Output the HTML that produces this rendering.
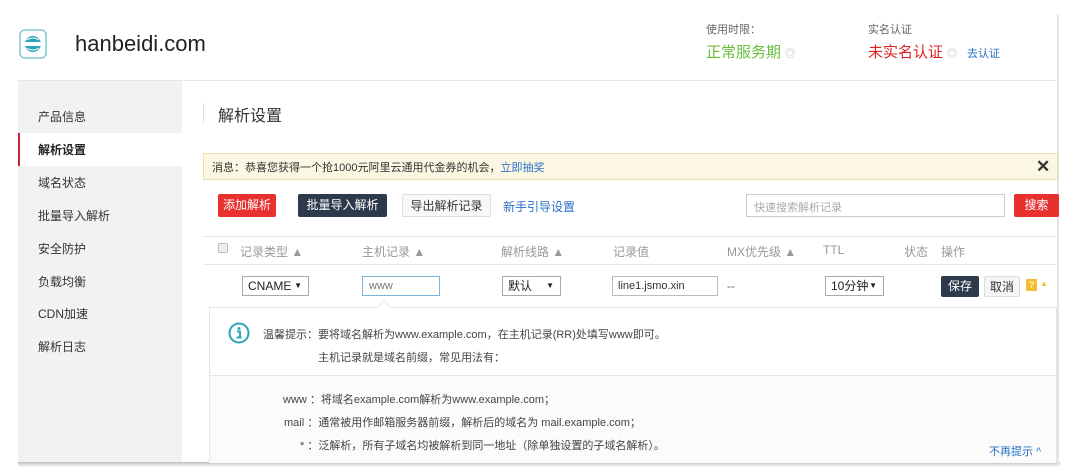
<!DOCTYPE html>
<html><head><meta charset="utf-8"><style>
*{margin:0;padding:0;box-sizing:border-box}
body{width:1080px;height:473px;background:#fff;position:relative;overflow:hidden;font-family:"Liberation Sans","Noto Sans CJK SC",sans-serif;color:#333;font-size:12px}
.a{position:absolute;white-space:nowrap}
.btn{position:absolute;height:23px;line-height:23px;text-align:center;font-size:12px;border-radius:2px}
.sel{position:absolute;height:20px;border:1px solid #a9a9a9;background:#fff;font-size:12px;line-height:18px;padding-left:5px;color:#222}
.sel:after{content:"▼";position:absolute;right:6px;font-size:8px;top:0}
.side{position:absolute;left:38px;font-size:12px;color:#333}
.th{position:absolute;top:243px;font-size:12px;color:#999}
</style></head><body>
<div class="a" style="left:18px;top:462px;width:1042px;height:5px;background:linear-gradient(#bbb,#fff)"></div>
<div class="a" style="left:1057px;top:15px;width:2px;height:450px;background:#e4e4e4"></div>
<svg class="a" style="left:19px;top:29px" width="28" height="30" viewBox="0 0 28 30"><rect x="1" y="1" width="26" height="28" rx="5" fill="#fff" stroke="#7fc9d3" stroke-width="1.5"/><circle cx="14" cy="15" r="8" fill="#2aa6b8"/><rect x="6" y="13" width="16" height="4" fill="#fff"/><path d="M8 11 Q14 7 20 11 M8 19 Q14 23 20 19" stroke="#fff" fill="none"/></svg>
<div class="a" style="left:75px;top:31px;font-size:22px;color:#222">hanbeidi.com</div>
<div class="a" style="left:706px;top:21px;font-size:11px;color:#666">使用时限：</div>
<div class="a" style="left:706px;top:41px;font-size:15px;color:#6abf3a">正常服务期 <span style="font-size:10px;color:#bbb">◎</span></div>
<div class="a" style="left:868px;top:21px;font-size:11px;color:#666">实名认证</div>
<div class="a" style="left:868px;top:41px;font-size:15px;color:#e02020">未实名认证 <span style="font-size:10px;color:#bbb">◎</span></div>
<div class="a" style="left:967px;top:45px;font-size:11px;color:#2a6fc9">去认证</div>
<div class="a" style="left:18px;top:80px;width:1040px;height:1px;background:#e6e6e6"></div>
<div class="a" style="left:18px;top:81px;width:164px;height:381px;background:#f3f2f3"></div>
<div class="a" style="left:18px;top:133px;width:164px;height:33px;background:#fff"></div>
<div class="a" style="left:18px;top:133px;width:2px;height:33px;background:#c9272f"></div>
<div class="side" style="top:108px">产品信息</div>
<div class="side" style="top:141px;color:#222;font-weight:bold">解析设置</div>
<div class="side" style="top:174px">域名状态</div>
<div class="side" style="top:207px">批量导入解析</div>
<div class="side" style="top:240px">安全防护</div>
<div class="side" style="top:273px">负载均衡</div>
<div class="side" style="top:305px">CDN加速</div>
<div class="side" style="top:338px">解析日志</div>
<div class="a" style="left:203px;top:103px;width:1px;height:20px;background:#ddd"></div>
<div class="a" style="left:218px;top:102px;font-size:16px;color:#333">解析设置</div>
<div class="a" style="left:203px;top:153px;width:855px;height:27px;background:#fcf7e3;border:1px solid #eadfb5"></div>
<div class="a" style="left:212px;top:159px;font-size:11px;color:#333">消息：恭喜您获得一个抢1000元阿里云通用代金券的机会，<span style="color:#2a6fc9">立即抽奖</span></div>
<div class="a" style="left:1036px;top:157px;font-size:17px;font-weight:bold;color:#333">✕</div>
<div class="btn" style="left:218px;top:194px;width:58px;background:#e8302f;color:#fff">添加解析</div>
<div class="btn" style="left:298px;top:194px;width:89px;background:#2d3a4b;color:#fff">批量导入解析</div>
<div class="btn" style="left:402px;top:194px;width:89px;background:#f8f8f8;border:1px solid #ddd;color:#333">导出解析记录</div>
<div class="a" style="left:503px;top:198px;color:#2a6fc9">新手引导设置</div>
<div class="a" style="left:746px;top:194px;width:259px;height:23px;border:1px solid #ccc;padding:4px 7px;font-size:11px;color:#aaa">快速搜索解析记录</div>
<div class="btn" style="left:1014px;top:194px;width:45px;background:#e8302f;color:#fff">搜索</div>
<div class="a" style="left:203px;top:236px;width:855px;height:1px;background:#e6e6e6"></div>
<div class="a" style="left:218px;top:243px;width:10px;height:10px;border:1px solid #bbb;background:#eee;border-radius:2px"></div>
<div class="th" style="left:240px">记录类型 ▲</div>
<div class="th" style="left:362px">主机记录 ▲</div>
<div class="th" style="left:501px">解析线路 ▲</div>
<div class="th" style="left:613px">记录值</div>
<div class="th" style="left:727px">MX优先级 ▲</div>
<div class="th" style="left:823px">TTL</div>
<div class="th" style="left:904px">状态</div>
<div class="th" style="left:941px">操作</div>
<div class="a" style="left:203px;top:264px;width:855px;height:1px;background:#e6e6e6"></div>
<div class="sel" style="left:242px;top:276px;width:67px">CNAME</div>
<div class="a" style="left:362px;top:276px;width:78px;height:20px;border:1px solid #7ab4dc;padding:3px 6px;font-size:11px;color:#777">www</div>
<div class="sel" style="left:502px;top:276px;width:59px">默认</div>
<div class="a" style="left:612px;top:276px;width:106px;height:20px;border:1px solid #bbb;padding:3px 5px;font-size:11px;color:#333">line1.jsmo.xin</div>
<div class="a" style="left:727px;top:279px;color:#666">--</div>
<div class="sel" style="left:825px;top:276px;width:59px">10分钟</div>
<div class="btn" style="left:941px;top:276px;width:38px;height:21px;line-height:21px;background:#2d3a4b;color:#fff">保存</div>
<div class="btn" style="left:984px;top:276px;width:36px;height:21px;line-height:21px;background:#f5f5f5;border:1px solid #ddd;color:#333">取消</div>
<div class="a" style="left:1026px;top:279px;width:11px;height:12px;background:#f0c030;color:#fff;font-size:9px;text-align:center;line-height:12px">?</div>
<div class="a" style="left:1040px;top:279px;font-size:8px;color:#f0c030">▲</div>
<div class="a" style="left:209px;top:307px;width:848px;height:156px;border:1px solid #e6e6e6;background:#fff"></div>
<div class="a" style="left:379px;top:302px;width:10px;height:10px;background:#fff;border-left:1px solid #e6e6e6;border-top:1px solid #e6e6e6;transform:rotate(45deg)"></div>
<div class="a" style="left:210px;top:375px;width:846px;height:88px;background:#fbfbfb;border-top:1px solid #e6e6e6"></div>
<svg class="a" style="left:228px;top:322px" width="22" height="22" viewBox="0 0 22 22"><circle cx="11" cy="11" r="9.5" fill="none" stroke="#2aa6b8" stroke-width="2"/><circle cx="11" cy="6.5" r="1.5" fill="#2aa6b8"/><path d="M9 9.5h3v6M8.5 15.5h5" stroke="#2aa6b8" stroke-width="2" fill="none"/></svg>
<div class="a" style="left:263px;top:326px;font-size:11px;color:#444">温馨提示：要将域名解析为www.example.com，在主机记录(RR)处填写www即可。</div>
<div class="a" style="left:318px;top:349px;font-size:11px;color:#444">主机记录就是域名前缀，常见用法有：</div>
<div class="a" style="left:283px;top:391px;font-size:11px;color:#444">www ：将域名example.com解析为www.example.com；</div>
<div class="a" style="left:284px;top:414px;font-size:11px;color:#444">mail ：通常被用作邮箱服务器前缀，解析后的域名为 mail.example.com；</div>
<div class="a" style="left:300px;top:437px;font-size:11px;color:#444">* ：泛解析，所有子域名均被解析到同一地址（除单独设置的子域名解析）。</div>
<div class="a" style="left:989px;top:443px;font-size:11px;color:#2a6fc9">不再提示 ^</div>
</body></html>
